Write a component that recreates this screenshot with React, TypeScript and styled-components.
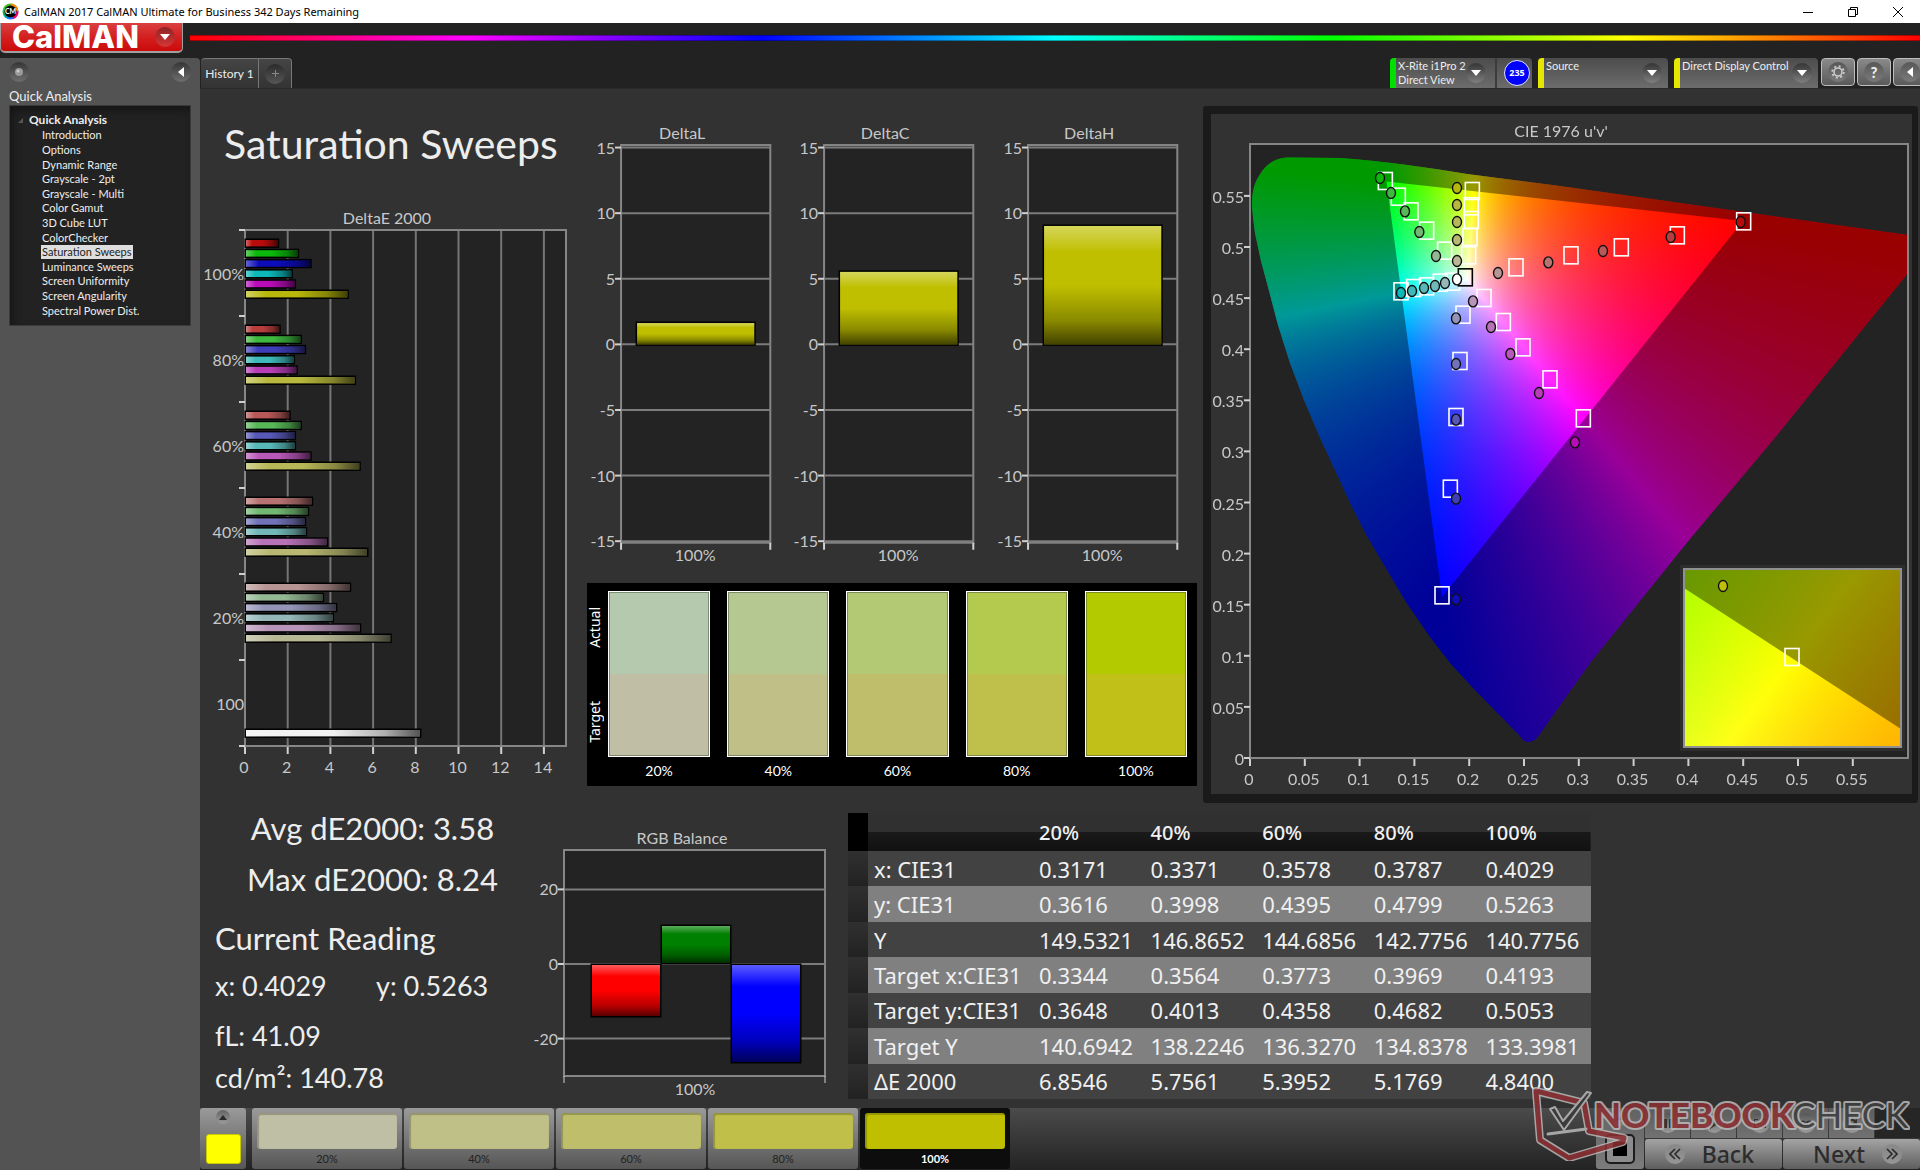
import React, { useLayoutEffect, useRef } from "react";
import styled, { createGlobalStyle } from "styled-components";

const UI = `Lato, "Open Sans", sans-serif`;
const SEGOE = `"Noto Sans", "Open Sans", sans-serif`;

const GlobalStyle = createGlobalStyle`
  *, *::before, *::after { box-sizing: border-box; }
  html, body { margin: 0; background: #323232; }
  body { font-family: ${UI}; color: #ededed; overflow-x: hidden; }
  button, select { font: inherit; color: inherit; margin: 0; padding: 0; border: 0; background: none; }
  h1, h2, p, ul { margin: 0; padding: 0; }
  ul { list-style: none; }
  svg { display: block; }
  svg text { font-family: ${UI}; }
`;

/* ---------- window frame ---------- */

const Page = styled.div`
  display: flex;
  flex-direction: column;
  min-height: 100vh;
  background: #222;
`;

const TitleBar = styled.header`
  display: flex;
  align-items: center;
  height: 23px;
  padding-left: 2px;
  background: #fff;
  color: #000;
  font: 11px/23px ${SEGOE};
`;

const TitleText = styled.span`
  flex: 1;
  padding-left: 5px;
`;

const WindowButton = styled.button`
  display: grid;
  place-items: center;
  width: 45px;
  height: 21px;
`;

const BrandBar = styled.div`
  display: flex;
  align-items: flex-start;
  height: 35px;
  gap: 7px;
`;

const Brand = styled.button`
  display: flex;
  align-items: center;
  justify-content: space-between;
  width: 183px;
  height: 30px;
  padding: 0 7px 0 11px;
  border: 1px solid #a0a0a0;
  border-width: 0 1px 2px 1px;
  border-radius: 0 0 5px 5px;
  background: linear-gradient(#d94040, #d42020 50%, #cb0a0a);
  color: #fff;
  font: 800 31px/28px Inter, sans-serif;
`;

const Rainbow = styled.div`
  flex: 1;
  height: 6px;
  margin-top: 12px;
  border: 1px solid rgba(0, 0, 0, 0.35);
  border-width: 1px 0;
  background: linear-gradient(90deg, #f00 0%, #f0f 16%, #00f 33%, #0ff 50%, #0f0 66%, #ff0 83%, #f00 100%);
`;

const Workspace = styled.div`
  display: flex;
  flex: 1;
`;

/* ---------- sidebar ---------- */

const Sidebar = styled.aside`
  flex: 0 0 200px;
  padding: 4px 9px 0;
  background: #535353;
  border-radius: 0 4px 0 0;
`;

const SidebarTools = styled.div`
  display: flex;
  justify-content: space-between;
`;

const Round = styled.span<{ $size?: number }>`
  display: grid;
  place-items: center;
  flex: none;
  width: ${(p) => p.$size ?? 20}px;
  height: ${(p) => p.$size ?? 20}px;
  border-radius: 50%;
  background: linear-gradient(rgba(0, 0, 0, 0.35), rgba(255, 255, 255, 0.16));
`;

const LightRound = styled(Round)`
  background: linear-gradient(rgba(0, 0, 0, 0.1), rgba(255, 255, 255, 0.3));
`;

const HelpRound = styled(Round)`
  font: 900 15px/18px ${UI};
`;

const RoundButton = styled(Round).attrs({ as: "button" })``;

const SidebarTitle = styled.h2`
  padding: 5px 0 0;
  font: 400 13px/18px ${UI};
`;

const Tree = styled.nav`
  height: 221px;
  padding: 6px 12px 8px 20px;
  border: 1px solid #3a3a3a;
  background: #222;
  box-shadow: inset 3px 5px 8px #161616;
`;

const TreeRoot = styled.div`
  display: flex;
  align-items: center;
  gap: 6px;
  margin-left: -12px;
  font: 700 12px/16px ${UI};
`;

const TreeList = styled.ul`
  display: flex;
  flex-direction: column;
  height: 190px;
  padding-left: 11px;
`;

const TreeItem = styled.li`
  flex: 1;
  display: flex;
  align-items: center;
`;

const TreeLink = styled.a<{ $active?: boolean }>`
  padding: 0 1px;
  color: ${(p) => (p.$active ? "#222" : "#eee")};
  background: ${(p) => (p.$active ? "#dedede" : "none")};
  font: 11px/14px ${UI};
  text-decoration: none;
  white-space: nowrap;
`;

/* ---------- main column ---------- */

const Main = styled.main`
  flex: 1;
  min-width: 0;
  display: flex;
  flex-direction: column;
`;

const TopStrip = styled.div`
  display: flex;
  height: 30px;
  padding-left: 1px;
`;

const Tab = styled.button<{ $w: number }>`
  display: grid;
  place-items: center;
  width: ${(p) => p.$w}px;
  border: 1px solid #777;
  border-left-width: 0;
  border-bottom: 0;
  border-radius: ${(p) => (p.$w > 40 ? "4px 0 0 0" : "0 4px 0 0")};
  background: linear-gradient(#454545, #333);
  font-size: 12px;
`;

const Devices = styled.div`
  display: flex;
  align-items: flex-start;
  margin-left: auto;
  overflow: hidden;
`;

const Device = styled.div<{ $w: number; $led: string }>`
  position: relative;
  display: flex;
  width: ${(p) => p.$w}px;
  height: 30px;
  margin-right: 6px;
  border-left: 6px solid ${(p) => p.$led};
  border-radius: 4px 4px 0 0;
  background: linear-gradient(#4c4c4c, #6c6c6c);
  font: 11px/14px ${UI};
`;

const DeviceButton = styled.button`
  display: flex;
  align-items: center;
  justify-content: space-between;
  width: 101px;
  padding: 0 9px 0 2px;
  border-right: 2px solid #3c3c3c;
  text-align: left;
  white-space: nowrap;
`;

const Badge = styled.span`
  display: grid;
  place-items: center;
  width: 26px;
  height: 26px;
  margin: 2px 0 0 7px;
  border: 1px solid #dfe3ff;
  border-radius: 50%;
  background: #00f;
  color: #fff;
  font: 700 9px/10px "Open Sans", sans-serif;
`;

const DeviceSelect = styled.select`
  appearance: none;
  width: 100%;
  padding: 0 24px 14px 2px;
  white-space: nowrap;
`;

const SelectArrow = styled(Round)`
  position: absolute;
  right: 6px;
  top: 5px;
  pointer-events: none;
`;

const ToolButton = styled.button`
  display: grid;
  place-items: center;
  flex: none;
  width: 34px;
  height: 28px;
  margin-right: 2px;
  border: 1px solid #bdbdbd;
  border-radius: 4px;
  background: linear-gradient(#8a8a8a, #5a5a5a);

  &:first-of-type { margin-left: -3px; }
  &:last-of-type { margin-right: -7px; }
`;

const Board = styled.div`
  flex: 1;
  background: #323232;
  border-top: 1px solid #2a2a2a;
`;

const UpperGrid = styled.div`
  display: grid;
  grid-template-columns: minmax(0, 385fr) minmax(0, 618fr) minmax(0, 717fr);
`;

const SweepColumn = styled.section`
  padding-top: 26px;
`;

const PageTitle = styled.h1`
  padding-left: 24px;
  font: 400 41px/58px ${UI};
  white-space: nowrap;
`;

const SweepChartBox = styled.div`
  padding-top: 27px;
`;

const DeltaColumn = styled.section`
  padding: 26px 6px 0 2px;
`;

const DeltaRow = styled.div`
  display: grid;
  grid-template-columns: repeat(3, minmax(0, 1fr));
`;

const SwatchPanel = styled.div`
  display: flex;
  height: 203px;
  padding: 8px 10px 0 0;
  background: #000;
`;

const SwatchLegend = styled.div`
  display: flex;
  flex-direction: column;
  justify-content: space-between;
  width: 21px;
  height: 166px;
  padding: 16px 0 14px;
`;

const LegendText = styled.span`
  width: 18px;
  padding-left: 2px;
  writing-mode: vertical-rl;
  transform: rotate(180deg);
  color: #fff;
  font: 14px/16px ${SEGOE};
`;

const SwatchGrid = styled.div`
  flex: 1;
  display: grid;
  grid-template-columns: repeat(5, minmax(0, 1fr));
  gap: 17px;
`;

const Swatch = styled.figure`
  margin: 0;
  text-align: center;
  color: #fff;
  font: 14px/28px ${UI};
`;

const SwatchColors = styled.div<{ $actual: string; $target: string }>`
  height: 166px;
  border: 1px solid #fff;
  box-shadow: inset 0 0 0 1px rgba(70, 80, 60, 0.5);
  background: linear-gradient(${(p) => p.$actual} 50%, ${(p) => p.$target} 50%);
`;

const CiePanel = styled.section`
  margin: 17px 2px 0 0;
  border: 8px solid #1a1a1a;
  border-width: 8px 6px 9px 8px;
  border-radius: 3px;
`;

const CieStage = styled.div`
  position: relative;
`;

const CieCanvas = styled.canvas`
  position: absolute;
  inset: 0;
  width: 100%;
  height: 100%;
`;

const CieOverlay = styled.svg`
  position: relative;
  width: 100%;
`;

const LowerGrid = styled.div`
  display: grid;
  grid-template-columns: minmax(0, 320fr) minmax(0, 328fr) minmax(0, 743fr) minmax(0, 329fr);
  height: 305px;
`;

const Stats = styled.section`
  padding-left: 15px;
  color: #ededed;
  font: 27px/42px ${UI};
  white-space: nowrap;
`;

const BigStat = styled.p`
  padding-left: 10px;
  text-align: center;
  font-size: 31px;
  line-height: 51px;
`;

const StatHeading = styled.h2`
  padding-top: 9px;
  font: 400 31px/48px ${UI};
`;

const Pair = styled.p`
  display: grid;
  grid-template-columns: 161px 1fr;
  padding: 3px 0 8px;
`;

const DataTable = styled.table`
  width: 100%;
  height: 286px;
  margin-top: 10px;
  border-collapse: collapse;
  table-layout: fixed;
  color: #f0f0f0;
  font: 22px/30px ${SEGOE};
  text-align: left;
  white-space: nowrap;

  th { font-weight: 400; }
  th, td { padding: 0 0 0 6px; }
  thead tr { height: 38px; background: linear-gradient(#303030 0 50%, #1a1a1a 50%, #111); }
  thead th { padding-top: 2px; font-size: 20px; font-weight: 500; }
  tbody tr { height: 35px; background: #424242; }
  tbody tr:nth-child(even) { background: #808080; }
`;

const Col = styled.col<{ $w: number }>`
  width: ${(p) => p.$w}px;
`;

const Gutter = styled.td<{ $head?: boolean }>`
  background: ${(p) => (p.$head ? "#000" : "linear-gradient(#303030, #222)")};
`;

/* ---------- footer ---------- */

const Footer = styled.footer`
  position: relative;
  display: flex;
  height: 62px;
  background: linear-gradient(#4b4b4b, #232323);
`;

const PatternButton = styled.button`
  display: flex;
  flex-direction: column;
  align-items: center;
  justify-content: space-between;
  width: 46px;
  height: 61px;
  margin-right: 6px;
  padding: 2px 0 5px;
  border-radius: 3px;
  background: linear-gradient(#9a9a9a, #565656);
`;

const PatternColor = styled.span`
  width: 35px;
  height: 30px;
  border: 1px solid #c8c800;
  border-radius: 3px;
  background: #ff0;
`;

const LevelButton = styled.button<{ $active?: boolean }>`
  width: 150px;
  height: 61px;
  margin-right: 2px;
  padding: 5px 5px 0;
  border-radius: 3px;
  background: ${(p) => (p.$active ? "#0d0d0d" : "linear-gradient(#9a9a9a, #565656)")};
  color: ${(p) => (p.$active ? "#fff" : "#222")};
  font: ${(p) => (p.$active ? 700 : 400)} 11px/20px ${UI};
`;

const LevelColor = styled.span<{ $color: string }>`
  display: block;
  height: 36px;
  border-radius: 3px;
  background: ${(p) => p.$color};
  box-shadow: inset 1px 1px 1px 1px rgba(0, 0, 0, 0.22);
`;

const Transport = styled.div`
  display: flex;
  gap: 1px;
  margin-left: auto;
`;

const StopButton = styled.button`
  display: flex;
  flex-direction: column;
  align-items: center;
  justify-content: space-between;
  width: 48px;
  height: 61px;
  padding: 0 0 5px;
  border-radius: 3px;
  background: linear-gradient(#626262, #7c7c7c);
`;

const TransportGrid = styled.div`
  display: grid;
  grid-template-columns: repeat(6, 45px);
  grid-template-rows: 30px 30px;
  gap: 1px;
  height: 61px;
`;

const MediaButton = styled.button<{ $off?: boolean }>`
  display: grid;
  place-items: center;
  background: ${(p) => (p.$off ? "#262626" : "linear-gradient(#5c5c5c, #727272)")};
`;

const StepButton = styled.button<{ $next?: boolean }>`
  grid-column: span 3;
  display: flex;
  align-items: center;
  justify-content: flex-end;
  gap: 17px;
  padding-right: ${(p) => (p.$next ? 18 : 28)}px;
  border-radius: 3px;
  background: linear-gradient(#a4a4a4, #5e5e5e);
  color: #2c2c2c;
  font: 500 23px/28px ${SEGOE};
`;

const Watermark = styled.svg`
  position: absolute;
  right: 10px;
  bottom: 9px;
  pointer-events: none;
`;

const MarkWord = styled.text<{ $weight: number }>`
  && { font-family: Lato, sans-serif; }
  font-weight: ${(p) => p.$weight};
`;

/* ---------- charts ---------- */

const Shades = () => (
  <defs>
    <linearGradient id="shadeX" x1="0" x2="1" y1="0" y2="0">
      <stop offset="0" stopColor="#fff" stopOpacity="0.36" />
      <stop offset="0.2" stopColor="#fff" stopOpacity="0" />
      <stop offset="0.5" stopColor="#000" stopOpacity="0" />
      <stop offset="0.8" stopColor="#000" stopOpacity="0.28" />
      <stop offset="1" stopColor="#000" stopOpacity="0.65" />
    </linearGradient>
    <linearGradient id="shadeY" x1="0" x2="0" y1="0" y2="1">
      <stop offset="0" stopColor="#fff" stopOpacity="0.36" />
      <stop offset="0.22" stopColor="#fff" stopOpacity="0" />
      <stop offset="0.5" stopColor="#000" stopOpacity="0" />
      <stop offset="0.8" stopColor="#000" stopOpacity="0.28" />
      <stop offset="1" stopColor="#000" stopOpacity="0.65" />
    </linearGradient>
  </defs>
);

type BarProps = { x: number; y: number; w: number; h: number; fill: string; dir: "X" | "Y" };
const Bar = ({ x, y, w, h, fill, dir }: BarProps) => (
  <g>
    <rect x={x} y={y} width={w} height={h} fill={fill} stroke="#000" strokeWidth="3" paintOrder="stroke" />
    <rect x={x} y={y} width={w} height={h} fill={`url(#shade${dir})`} />
  </g>
);

const LOW = [12, 62, 88, 114, 148];
const hue = (mask: string, level: number) =>
  `rgb(${mask
    .split("")
    .map((m) => (m === "1" ? 184 : LOW[level]))
    .join(",")})`;
const MASKS = ["100", "010", "001", "011", "101", "110"];
const SWEEPS = [
  { label: "100%", values: [1.58, 2.51, 3.1, 2.22, 2.37, 4.84] },
  { label: "80%", values: [1.65, 2.64, 2.84, 2.32, 2.45, 5.18] },
  { label: "60%", values: [2.12, 2.64, 2.37, 2.37, 3.1, 5.4] },
  { label: "40%", values: [3.17, 2.98, 2.84, 2.89, 3.87, 5.76] },
  { label: "20%", values: [4.95, 3.68, 4.3, 4.15, 5.42, 6.85] },
  { label: "100", values: [] },
];

const SweepChart = () => (
  <svg viewBox="0 0 385 586" width="100%" fontSize="16" fill="#c8c8c8">
    <Shades />
    <text x="187" y="24" textAnchor="middle">DeltaE 2000</text>
    <rect x="45" y="30" width="321" height="516" fill="#232323" />
    {[2, 4, 6, 8, 10, 12, 14].map((v) => (
      <path key={v} d={`M${45 + v * 21.35} 30V546`} stroke="#757575" strokeWidth="2" />
    ))}
    <rect x="45" y="30" width="321" height="516" fill="none" stroke="#868686" strokeWidth="2" />
    {[0, 2, 4, 6, 8, 10, 12, 14].map((v) => (
      <g key={v}>
        <path d={`M${45 + v * 21.35} 547v7`} stroke="#d0d0d0" strokeWidth="2" />
        <text x={44 + v * 21.35} y="573" textAnchor="middle">{v}</text>
      </g>
    ))}
    {[0, 1, 2, 3, 4, 5, 6].map((i) => (
      <path key={i} d={`M39 ${30 + i * 86}h6`} stroke="#d0d0d0" strokeWidth="2" />
    ))}
    {SWEEPS.map((s, g) => (
      <g key={s.label}>
        <text x="44" y={80 + g * 86} textAnchor="end">{s.label}</text>
        {s.values.map((v, i) => (
          <Bar key={i} x={46} y={40 + g * 86 + i * 10.2} w={v * 21.35 - 2} h={6.4} fill={hue(MASKS[i], g)} dir="X" />
        ))}
      </g>
    ))}
    <Bar x={46} y={530} w={8.24 * 21.35 - 2} h={6.4} fill="#f2f2f2" dir="X" />
  </svg>
);

const DeltaChart = ({ title, value }: { title: string; value: number }) => {
  const y = (v: number) => 229 - v * 13.1;
  return (
    <svg viewBox="1 0 203 467" width="100%" fontSize="16" fill="#c8c8c8">
      <text x="96" y="24" textAnchor="middle">{title}</text>
      <rect x="35" y="30" width="149" height="397" fill="#232323" stroke="#868686" strokeWidth="2" />
      {[15, 10, 5, 0, -5, -10, -15].map((v) => (
        <g key={v}>
          <path d={`M35 ${y(v)}h149`} stroke="#7c7c7c" strokeWidth="2" />
          <path d={`M29 ${y(v)}h6`} stroke="#d0d0d0" strokeWidth="2" />
          <text x="29" y={y(v) + 6} textAnchor="end">{v}</text>
        </g>
      ))}
      <path d="M35 427v7M184 427v7" stroke="#d0d0d0" strokeWidth="2" />
      <Bar x={51} y={y(value) + 1} w={117} h={value * 13.1 - 1} fill="#bfbf00" dir="Y" />
      <text x="109" y="445" textAnchor="middle">100%</text>
    </svg>
  );
};

const BalanceChart = () => {
  const y = (v: number) => 161 - v * 3.73;
  return (
    <svg viewBox="0 0 328 305" width="100%" fontSize="16" fill="#c8c8c8">
      <text x="162" y="41" textAnchor="middle">RGB Balance</text>
      <rect x="44" y="47" width="261" height="226" fill="#232323" stroke="#868686" strokeWidth="2" />
      {[20, 0, -20].map((v) => (
        <g key={v}>
          <path d={`M44 ${y(v)}h261`} stroke="#7c7c7c" strokeWidth="2" />
          <path d={`M38 ${y(v)}h6`} stroke="#d0d0d0" strokeWidth="2" />
          <text x="38" y={y(v) + 6} textAnchor="end">{v}</text>
        </g>
      ))}
      <path d="M44 273v7M305 273v7" stroke="#d0d0d0" strokeWidth="1" />
      <Bar x={72} y={162} w={68} h={51} fill="#f00" dir="Y" />
      <Bar x={142} y={123} w={68} h={37} fill="#008000" dir="Y" />
      <Bar x={212} y={162} w={68} h={97} fill="#00f" dir="Y" />
      <text x="175" y="292" textAnchor="middle">100%</text>
    </svg>
  );
};

/* ---------- CIE 1976 diagram ---------- */

const CIE_W = 701;
const CIE_H = 680;
const ORIGIN_X = 39;
const ORIGIN_Y = 644;
const U_SCALE = 1096;
const V_SCALE = 1022;

const LOCUS_TOP =
  "M41 92 C41 78 43 70 48 62 C55 50 64 44 76 43.5 L129 44 C170 47 215 53 256 60 L349 72 L526 97 L697 121 V159 L562 326 L478 426 L379 549 L328 621 Q324 628 317 628 Q313 628 309 622";
const LOCUS_LEFT = [
  [41, 92], [42, 103], [44, 119], [50, 147], [57, 173], [67, 211], [79, 249], [93, 286], [110, 326],
  [125, 358], [140, 391], [156, 422], [173, 451], [195, 488], [219, 523], [240, 550], [264, 576], [309, 622],
];

const toRgb = (x: number, y: number) => {
  const z = 1 - x - y;
  const r = Math.max(0, 3.2406 * x - 1.5372 * y - 0.4986 * z);
  const g = Math.max(0, -0.9689 * x + 1.8758 * y + 0.0415 * z);
  const b = Math.max(0, 0.0557 * x - 0.204 * y + 1.057 * z);
  const m = Math.max(r, g, b) || 1;
  return [(r / m) * 255, (g / m) * 255, (b / m) * 255];
};

const field = (w: number, h: number, xy: (px: number, py: number) => number[]) => {
  const c = document.createElement("canvas");
  c.width = w;
  c.height = h;
  const ctx = c.getContext("2d")!;
  const img = ctx.createImageData(w, h);
  for (let j = 0; j < h; j++) {
    for (let i = 0; i < w; i++) {
      const [x, y] = xy(i, j);
      const [r, g, b] = toRgb(x, y);
      const o = (j * w + i) * 4;
      img.data[o] = r;
      img.data[o + 1] = g;
      img.data[o + 2] = b;
      img.data[o + 3] = 255;
    }
  }
  ctx.putImageData(img, 0, 0);
  return c;
};

const locusPath = () => {
  const p = new Path2D(LOCUS_TOP);
  [...LOCUS_LEFT].reverse().forEach(([x, y]) => p.lineTo(x, y));
  p.closePath();
  return p;
};

const INSET = { x: 473, y: 455, w: 217, h: 178 };

const paintCie = (ctx: CanvasRenderingContext2D) => {
  ctx.clearRect(0, 0, CIE_W, CIE_H);
  ctx.fillStyle = "#323232";
  ctx.fillRect(0, 0, CIE_W, CIE_H);
  ctx.fillStyle = "#232323";
  ctx.fillRect(39, 30, 658, 614);

  const main = field(CIE_W, CIE_H, (px, py) => {
    const u = (px - ORIGIN_X) / U_SCALE;
    const v = (ORIGIN_Y + 1 - py) / (V_SCALE + 4);
    const d = 6 * u - 16 * v + 12;
    return [(9 * u) / d, (4 * v) / d];
  });
  ctx.save();
  ctx.clip(locusPath());
  ctx.drawImage(main, 0, 0);
  ctx.fillStyle = "rgba(0,0,0,0.4)";
  ctx.fill(new Path2D(`M0 0H${CIE_W}V${CIE_H}H0Z M175.5 67.5 L532 107 L231 483Z`), "evenodd");
  ctx.restore();

  const { x, y, w, h } = INSET;
  ctx.fillStyle = "#2e2e2e";
  ctx.fillRect(x - 4, y - 4, w + 8, h + 8);
  const zoom = field(w, h, (px, py) => [0.4193 + (px - 108) / 4207, 0.5053 - (py - 88) / 3380]);
  ctx.drawImage(zoom, x, y);
  ctx.fillStyle = "rgba(0,0,0,0.4)";
  ctx.fill(new Path2D(`M${x} ${y}H${x + w}V${y + h - 18}L${x} ${y + 19}Z`));
};

/* Marker positions are surveyed on a grid three times finer than the plot. */
const at = ([x, y]: number[]) => [x / 3 - 11, y / 3 - 14];
const TARGETS = [
  [556, 243], [595, 290], [633, 334], [680, 392], [734, 452],
  [817, 273], [814, 319], [814, 360], [810, 411], [806, 466],
  [603, 574], [641, 564], [680, 559], [721, 548], [758, 545],
  [948, 502], [1113, 466], [1264, 442], [1432, 406], [1631, 364],
  [852, 594], [910, 666], [969, 742], [1050, 838], [1150, 955],
  [789, 644], [780, 783], [768, 951], [751, 1166], [726, 1486],
];
const READINGS: { mask: string; points: number[][] }[] = [
  { mask: "010", points: [[540, 234], [573, 279], [615, 334], [658, 396], [708, 468]] },
  { mask: "110", points: [[771, 264], [771, 315], [771, 366], [771, 420], [771, 483]] },
  { mask: "011", points: [[603, 579], [636, 573], [672, 564], [705, 558], [735, 549]] },
  { mask: "100", points: [[1622, 366], [1412, 411], [1209, 453], [1045, 487], [894, 519]] },
  { mask: "101", points: [[1125, 1027], [1017, 879], [931, 762], [873, 681], [819, 604]] },
  { mask: "001", points: [[768, 1498], [768, 1196], [768, 959], [768, 792], [768, 655]] },
];

const Target = ({ cx, cy, color = "#fff" }: { cx: number; cy: number; color?: string }) => (
  <rect x={cx - 7} y={cy - 8.5} width="14" height="17" fill="none" stroke={color} strokeWidth="1.6" />
);
const Reading = ({ cx, cy, fill }: { cx: number; cy: number; fill: string }) => (
  <ellipse cx={cx} cy={cy} rx="4.5" ry="5.5" fill={fill} stroke="#111" strokeWidth="1.4" />
);

const CieDiagram = () => {
  const ref = useRef<HTMLCanvasElement>(null);
  useLayoutEffect(() => {
    const ctx = ref.current?.getContext("2d");
    if (ctx) paintCie(ctx);
  }, []);
  const ticks = Array.from({ length: 12 }, (_, i) => i * 0.05);
  const name = (t: number) => String(Number(t.toFixed(2)));
  const white = at([796, 532]);
  const whiteRead = at([771, 538]);
  return (
    <CieStage>
      <CieCanvas ref={ref} width={CIE_W} height={CIE_H} />
      <CieOverlay viewBox={`0 0 ${CIE_W} ${CIE_H}`} fontSize="16" fill="#c8c8c8">
        <text x="350" y="23" textAnchor="middle">CIE 1976 u'v'</text>
        <rect x="39" y="30" width="658" height="614" fill="none" stroke="#868686" strokeWidth="2" />
        {ticks.map((t) => (
          <g key={t}>
            <path d={`M${ORIGIN_X + t * U_SCALE} 645v7`} stroke="#d0d0d0" strokeWidth="2" />
            <text x={ORIGIN_X - 1 + t * U_SCALE} y="671" textAnchor="middle">{name(t)}</text>
            <path d={`M33 ${ORIGIN_Y - t * V_SCALE}h6`} stroke="#d0d0d0" strokeWidth="2" />
            <text x="33" y={ORIGIN_Y + 7 - t * V_SCALE} textAnchor="end">{name(t)}</text>
          </g>
        ))}
        {TARGETS.map((t, i) => {
          const [x, y] = at(t);
          return <Target key={i} cx={x} cy={y} />;
        })}
        <Target cx={white[0]} cy={white[1]} color="#000" />
        {READINGS.map((r) =>
          r.points.map((p, i) => {
            const [x, y] = at(p);
            return <Reading key={r.mask + i} cx={x} cy={y} fill={hue(r.mask, i)} />;
          })
        )}
        <Reading cx={whiteRead[0]} cy={whiteRead[1]} fill="#fff" />
        <rect x={INSET.x} y={INSET.y} width={INSET.w} height={INSET.h} fill="none" stroke="#909090" strokeWidth="2" />
        <Target cx={581} cy={543} />
        <Reading cx={512} cy={472} fill="#bfbf0c" />
      </CieOverlay>
    </CieStage>
  );
};

/* ---------- small icons ---------- */

const Down = () => (
  <svg width="10" height="6" viewBox="0 0 10 6"><path d="M0 0h10L5 6z" fill="#fff" /></svg>
);
const Left = () => (
  <svg width="6" height="10" viewBox="0 0 6 10"><path d="M6 0v10L0 5z" fill="#fff" /></svg>
);
const Up = () => (
  <svg width="8" height="5" viewBox="0 0 8 5"><path d="M0 5h8L4 0z" fill="#2a2a2a" /></svg>
);
const Gear = () => (
  <svg width="14" height="14" viewBox="0 0 14 14" fill="none" stroke="#ccc">
    <circle cx="7" cy="7" r="4" strokeWidth="1.6" />
    <circle cx="7" cy="7" r="5.8" strokeWidth="1.8" strokeDasharray="2 2.555" />
  </svg>
);
const Chevrons = ({ flip }: { flip?: boolean }) => (
  <svg width="12" height="12" viewBox="0 0 12 12" fill="none" stroke="#2a2a2a" strokeWidth="1.6">
    <path d={flip ? "M1 1l5 5-5 5M6 1l5 5-5 5" : "M6 1L1 6l5 5M11 1L6 6l5 5"} />
  </svg>
);
const MEDIA: { name: string; path: string }[] = [
  { name: "Pause", path: "M3 2h3v9H3zM8 2h3v9H8z" },
  { name: "Play", path: "M3 1l9 5.5-9 5.5z" },
  { name: "Single", path: "M1 2h4v1H2v7h3v1H1zM9 2h4v9H9v-1h3V3H9zM5 5l4 1.5L5 8z" },
  { name: "Loop", path: "M1 6.5a3 3 0 016 0 3 3 0 016 0 3 3 0 01-6 0 3 3 0 01-6 0zM2.500 6.500a1.500 1.500 0 003 0 1.500 1.500 0 00-3 0zM8.500 6.500a1.500 1.500 0 003 0 1.500 1.500 0 00-3 0z" },
  { name: "Refresh", path: "M2 6a5 5 0 018-3l2-1v5H8l1-2a3 3 0 00-5 1zM12 8a5 5 0 01-8 3l-1 1V8h3z" },
];

const NotebookcheckMark = () => (
  <Watermark width="382" height="76" viewBox="0 0 382 76">
    <g opacity="0.85" strokeLinejoin="round" strokeLinecap="round">
      <path d="M8 6L56 18L61 46L96 53L95 57L41 73L12 55Z" fill="none" stroke="#b9b9b9" strokeWidth="8" />
      <path d="M8 6L56 18L61 46L96 53L95 57L41 73L12 55Z" fill="none" stroke="#8e2f33" strokeWidth="5" />
      <path d="M22 24l5-2 8 14 24-29 4 1-27 37z" fill="#3a3a3a" stroke="#b9b9b9" strokeWidth="2" />
      <path d="M20 49L58 44" stroke="#b9b9b9" strokeWidth="3" />
      <g fontSize="35" paintOrder="stroke" stroke="#b9b9b9" strokeWidth="4">
        <MarkWord x="66" y="43" fill="#8e2f33" $weight={900}>NOTEBOOK</MarkWord>
        <MarkWord x="264" y="43" fill="#3f3f3f" $weight={400}>CHECK</MarkWord>
      </g>
    </g>
  </Watermark>
);

/* ---------- data ---------- */

const PAGES = [
  "Introduction", "Options", "Dynamic Range", "Grayscale - 2pt", "Grayscale - Multi", "Color Gamut", "3D Cube LUT",
  "ColorChecker", "Saturation Sweeps", "Luminance Sweeps", "Screen Uniformity", "Screen Angularity", "Spectral Power Dist.",
];

const LEVELS = [
  { label: "20%", actual: "#b5c9ae", target: "#c0bfa5" },
  { label: "40%", actual: "#b5c892", target: "#c0bf88" },
  { label: "60%", actual: "#b3c974", target: "#bfbf6b" },
  { label: "80%", actual: "#b3ca4e", target: "#bfc04b" },
  { label: "100%", actual: "#b3ca00", target: "#c0c018" },
];
const FOOTER_COLORS = ["#bfbfa5", "#bfbf88", "#bfbf6b", "#bfbf4a", "#bfbf00"];

const ROWS: [string, string[]][] = [
  ["x: CIE31", ["0.3171", "0.3371", "0.3578", "0.3787", "0.4029"]],
  ["y: CIE31", ["0.3616", "0.3998", "0.4395", "0.4799", "0.5263"]],
  ["Y", ["149.5321", "146.8652", "144.6856", "142.7756", "140.7756"]],
  ["Target x:CIE31", ["0.3344", "0.3564", "0.3773", "0.3969", "0.4193"]],
  ["Target y:CIE31", ["0.3648", "0.4013", "0.4358", "0.4682", "0.5053"]],
  ["Target Y", ["140.6942", "138.2246", "136.3270", "134.8378", "133.3981"]],
  ["ΔE 2000", ["6.8546", "5.7561", "5.3952", "5.1769", "4.8400"]],
];

const AppIcon = () => (
  <svg width="17" height="17" viewBox="0 0 17 17">
    <defs>
      <linearGradient id="ringA" x1="0" x2="1" y1="0" y2="1">
        <stop offset="0" stopColor="#9c0" />
        <stop offset="0.35" stopColor="#0b4" />
        <stop offset="0.65" stopColor="#08f" />
        <stop offset="1" stopColor="#c0f" />
      </linearGradient>
    </defs>
    <circle cx="8.5" cy="8.5" r="8" fill="url(#ringA)" />
    <path d="M8.5.5a8 8 0 018 8h-8z" fill="#f80" />
    <path d="M16.5 8.5a8 8 0 01-5 7.4l-3-7.4z" fill="#f06" />
    <circle cx="8.5" cy="8.5" r="6" fill="#000" />
    <text x="8.5" y="11" textAnchor="middle" fontSize="7" fontWeight="700" fill="#fff">CM</text>
  </svg>
);

export default function App() {
  return (
    <Page>
      <GlobalStyle />
      <TitleBar>
        <AppIcon />
        <TitleText>CalMAN 2017 CalMAN Ultimate for Business 342 Days Remaining</TitleText>
        <WindowButton aria-label="Minimize">
          <svg width="10" height="10"><path d="M0 5.5h10" stroke="#000" /></svg>
        </WindowButton>
        <WindowButton aria-label="Restore">
          <svg width="10" height="10" fill="none" stroke="#000"><path d="M.5 2.5h7v7h-7zM2.5 2.5v-2h7v7h-2" /></svg>
        </WindowButton>
        <WindowButton aria-label="Close">
          <svg width="10" height="10" stroke="#000"><path d="M0 0l10 10M10 0L0 10" /></svg>
        </WindowButton>
      </TitleBar>
      <BrandBar>
        <Brand>
          CalMAN
          <Round><Down /></Round>
        </Brand>
        <Rainbow />
      </BrandBar>
      <Workspace>
        <Sidebar>
          <SidebarTools>
            <RoundButton aria-label="Pin">
              <svg width="8" height="8"><circle cx="4" cy="4" r="4" fill="#999" /><circle cx="3" cy="3" r="1.5" fill="#ccc" /></svg>
            </RoundButton>
            <RoundButton aria-label="Collapse"><Left /></RoundButton>
          </SidebarTools>
          <SidebarTitle>Quick Analysis</SidebarTitle>
          <Tree>
            <TreeRoot>
              <svg width="5" height="5"><path d="M5 0v5H0z" fill="#555" /></svg>
              Quick Analysis
            </TreeRoot>
            <TreeList>
              {PAGES.map((p) => (
                <TreeItem key={p}>
                  <TreeLink href="#" $active={p === "Saturation Sweeps"}>{p}</TreeLink>
                </TreeItem>
              ))}
            </TreeList>
          </Tree>
        </Sidebar>
        <Main>
          <TopStrip>
            <Tab $w={58}>History 1</Tab>
            <Tab $w={33} aria-label="Add history">
              <Round>
                <svg width="7" height="7"><path d="M0 3.5h7M3.5 0v7" stroke="#888" /></svg>
              </Round>
            </Tab>
            <Devices>
              <Device $w={142} $led="#00e000">
                <DeviceButton>
                  <span>X-Rite i1Pro 2<br />Direct View</span>
                  <Round><Down /></Round>
                </DeviceButton>
                <Badge>235</Badge>
              </Device>
              <Device $w={130} $led="#e6e600">
                <DeviceSelect aria-label="Source"><option>Source</option></DeviceSelect>
                <SelectArrow><Down /></SelectArrow>
              </Device>
              <Device $w={144} $led="#e6e600">
                <DeviceSelect aria-label="Display control"><option>Direct Display Control</option></DeviceSelect>
                <SelectArrow><Down /></SelectArrow>
              </Device>
              <ToolButton aria-label="Settings"><Round><Gear /></Round></ToolButton>
              <ToolButton aria-label="Help"><HelpRound>?</HelpRound></ToolButton>
              <ToolButton aria-label="Collapse devices"><Round><Left /></Round></ToolButton>
            </Devices>
          </TopStrip>
          <Board>
            <UpperGrid>
              <SweepColumn>
                <PageTitle>Saturation Sweeps</PageTitle>
                <SweepChartBox><SweepChart /></SweepChartBox>
              </SweepColumn>
              <DeltaColumn>
                <DeltaRow>
                  <DeltaChart title="DeltaL" value={1.7} />
                  <DeltaChart title="DeltaC" value={5.6} />
                  <DeltaChart title="DeltaH" value={9.1} />
                </DeltaRow>
                <SwatchPanel>
                  <SwatchLegend>
                    <LegendText>Actual</LegendText>
                    <LegendText>Target</LegendText>
                  </SwatchLegend>
                  <SwatchGrid>
                    {LEVELS.map((l) => (
                      <Swatch key={l.label}>
                        <SwatchColors $actual={l.actual} $target={l.target} />
                        <figcaption>{l.label}</figcaption>
                      </Swatch>
                    ))}
                  </SwatchGrid>
                </SwatchPanel>
              </DeltaColumn>
              <CiePanel><CieDiagram /></CiePanel>
            </UpperGrid>
            <LowerGrid>
              <Stats>
                <BigStat>Avg dE2000: 3.58</BigStat>
                <BigStat>Max dE2000: 8.24</BigStat>
                <StatHeading>Current Reading</StatHeading>
                <Pair><span>x: 0.4029</span><span>y: 0.5263</span></Pair>
                <p>fL: 41.09</p>
                <p>cd/m²: 140.78</p>
              </Stats>
              <BalanceChart />
              <div>
                <DataTable>
                  <colgroup>
                    <Col $w={20} />
                    <Col $w={165} />
                    <col span={5} />
                  </colgroup>
                  <thead>
                    <tr>
                      <Gutter $head />
                      <th />
                      {LEVELS.map((l) => <th key={l.label} scope="col">{l.label}</th>)}
                    </tr>
                  </thead>
                  <tbody>
                    {ROWS.map(([name, cells]) => (
                      <tr key={name}>
                        <Gutter />
                        <th scope="row">{name}</th>
                        {cells.map((c) => <td key={c}>{c}</td>)}
                      </tr>
                    ))}
                  </tbody>
                </DataTable>
              </div>
            </LowerGrid>
          </Board>
          <Footer>
            <PatternButton aria-label="Pattern window">
              <Round $size={14}><Up /></Round>
              <PatternColor />
            </PatternButton>
            {LEVELS.map((l, i) => (
              <LevelButton key={l.label} $active={i === 4}>
                <LevelColor $color={FOOTER_COLORS[i]} />
                {l.label}
              </LevelButton>
            ))}
            <Transport>
              <StopButton aria-label="Stop">
                <Round $size={18}><Up /></Round>
                <svg width="30" height="30">
                  <rect x="1" y="1" width="28" height="28" rx="4" fill="#8c8c8c" stroke="#1c1c1c" strokeWidth="2" />
                  <rect x="8" y="8" width="14" height="14" fill="#000" />
                </svg>
              </StopButton>
              <TransportGrid>
                {MEDIA.map((m) => (
                  <MediaButton key={m.name} aria-label={m.name}>
                    <LightRound>
                      <svg width="14" height="13"><path d={m.path} fill="#333" fillRule="evenodd" /></svg>
                    </LightRound>
                  </MediaButton>
                ))}
                <MediaButton $off aria-label="Record" disabled />
                <StepButton><LightRound><Chevrons /></LightRound>Back</StepButton>
                <StepButton $next>Next<LightRound><Chevrons flip /></LightRound></StepButton>
              </TransportGrid>
            </Transport>
            <NotebookcheckMark />
          </Footer>
        </Main>
      </Workspace>
    </Page>
  );
}
